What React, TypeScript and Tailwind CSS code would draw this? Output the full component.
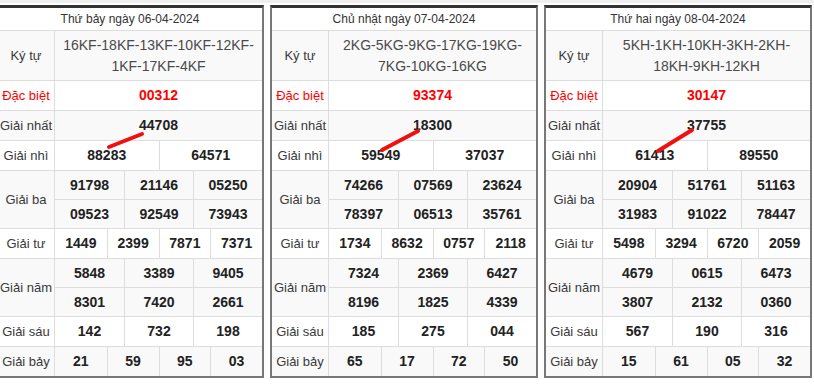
import React from "react";

type Day = {
  title: string;
  kytu: [string, string];
  db: string;
  g1: string;
  g2: string[];
  g3: string[];
  g4: string[];
  g5: string[];
  g6: string[];
  g7: string[];
  line: [number, number, number, number];
};

const days: Day[] = [
  {
    title: "Thứ bảy ngày 06-04-2024",
    kytu: ["16KF-18KF-13KF-10KF-12KF-", "1KF-17KF-4KF"],
    db: "00312",
    g1: "44708",
    g2: ["88283", "64571"],
    g3: ["91798", "21146", "05250", "09523", "92549", "73943"],
    g4: ["1449", "2399", "7871", "7371"],
    g5: ["5848", "3389", "9405", "8301", "7420", "2661"],
    g6: ["142", "732", "198"],
    g7: ["21", "59", "95", "03"],
    line: [111, 139, 144, 126],
  },
  {
    title: "Chủ nhật ngày 07-04-2024",
    kytu: ["2KG-5KG-9KG-17KG-19KG-", "7KG-10KG-16KG"],
    db: "93374",
    g1: "18300",
    g2: ["59549", "37037"],
    g3: ["74266", "07569", "23624", "78397", "06513", "35761"],
    g4: ["1734", "8632", "0757", "2118"],
    g5: ["7324", "2369", "6427", "8196", "1825", "4339"],
    g6: ["185", "275", "044"],
    g7: ["65", "17", "72", "50"],
    line: [110, 142, 146, 123],
  },
  {
    title: "Thứ hai ngày 08-04-2024",
    kytu: ["5KH-1KH-10KH-3KH-2KH-", "18KH-9KH-12KH"],
    db: "30147",
    g1: "37755",
    g2: ["61413", "89550"],
    g3: ["20904", "51761", "51163", "31983", "91022", "78447"],
    g4: ["5498", "3294", "6720", "2059"],
    g5: ["4679", "0615", "6473", "3807", "2132", "0360"],
    g6: ["567", "190", "316"],
    g7: ["15", "61", "05", "32"],
    line: [112, 143, 146, 122],
  },
];

function Cells({ values, cols, h }: { values: string[]; cols: string; h: string }) {
  return (
    <div className={`grid ${cols} ${h}`}>
      {values.map((v, i) => (
        <div
          key={i}
          className={`flex items-center justify-center font-bold text-[14px] text-[#222] ${i > 0 ? "border-l border-[#ddd]" : ""}`}
        >
          {v}
        </div>
      ))}
    </div>
  );
}

function Row({
  label,
  gray,
  h,
  red,
  children,
}: {
  label: string;
  gray?: boolean;
  h: string;
  red?: boolean;
  children: React.ReactNode;
}) {
  return (
    <div className={`flex border-b border-[#ddd] ${h} ${gray ? "bg-[#f9f9f9]" : "bg-white"}`}>
      <div
        className={`w-[57px] shrink-0 flex items-center justify-center border-r border-[#ddd] text-[13px] ${red ? "text-[#ff0000]" : "text-[#3a3a3a]"}`}
      >
        {label}
      </div>
      <div className="flex-1 min-w-0">{children}</div>
    </div>
  );
}

function Table({ d }: { d: Day }) {
  const [x1, y1, x2, y2] = d.line;
  return (
    <div className="relative w-[268px] shrink-0 border-t-[3px] border-t-[#333] border-x-2 border-b-2 border-x-[#777] border-b-[#777]">
      <div className="h-[23px] flex items-center justify-center border-b border-[#ddd] text-[12px] text-[#333] bg-white">
        {d.title}
      </div>
      <Row label="Ký tự" gray h="h-[50px]">
        <div className="h-full flex flex-col items-center justify-center text-[14px] leading-[21px] text-[#4a4a4a]">
          <span>{d.kytu[0]}</span>
          <span>{d.kytu[1]}</span>
        </div>
      </Row>
      <Row label="Đặc biệt" red h="h-[30px]">
        <div className="h-full flex items-center justify-center font-bold text-[14px] text-[#ff0000]">{d.db}</div>
      </Row>
      <Row label="Giải nhất" gray h="h-[30px]">
        <div className="h-full flex items-center justify-center font-bold text-[14px] text-[#222]">{d.g1}</div>
      </Row>
      <Row label="Giải nhì" h="h-[30px]">
        <Cells values={d.g2} cols="grid-cols-2" h="h-full" />
      </Row>
      <Row label="Giải ba" gray h="h-[58px]">
        <div className="border-b border-[#ddd]">
          <Cells values={d.g3.slice(0, 3)} cols="grid-cols-3" h="h-[28px]" />
        </div>
        <Cells values={d.g3.slice(3)} cols="grid-cols-3" h="h-[29px]" />
      </Row>
      <Row label="Giải tư" h="h-[30px]">
        <Cells values={d.g4} cols="grid-cols-4" h="h-full" />
      </Row>
      <Row label="Giải năm" gray h="h-[58px]">
        <div className="border-b border-[#ddd]">
          <Cells values={d.g5.slice(0, 3)} cols="grid-cols-3" h="h-[28px]" />
        </div>
        <Cells values={d.g5.slice(3)} cols="grid-cols-3" h="h-[29px]" />
      </Row>
      <Row label="Giải sáu" h="h-[30px]">
        <Cells values={d.g6} cols="grid-cols-3" h="h-full" />
      </Row>
      <div className="flex h-[29px] bg-[#f9f9f9]">
        <div className="w-[57px] shrink-0 flex items-center justify-center border-r border-[#ddd] text-[13px] text-[#3a3a3a]">
          Giải bảy
        </div>
        <div className="flex-1 min-w-0">
          <Cells values={d.g7} cols="grid-cols-4" h="h-full" />
        </div>
      </div>
      <svg className="absolute left-0 top-0 pointer-events-none" width="264" height="372">
        <line x1={x1} y1={y1} x2={x2} y2={y2} stroke="#f01010" strokeWidth="4" strokeLinecap="round" />
      </svg>
    </div>
  );
}

export default function App() {
  return (
    <div className="w-[814px] h-[384px] overflow-hidden bg-white font-['Liberation_Sans',Arial,sans-serif]">
      <div className="h-[3px] bg-[#eeeeee]" />
      <div className="flex gap-[6px] mt-[2px] -ml-[4px]">
        {days.map((d) => (
          <Table key={d.title} d={d} />
        ))}
      </div>
    </div>
  );
}
